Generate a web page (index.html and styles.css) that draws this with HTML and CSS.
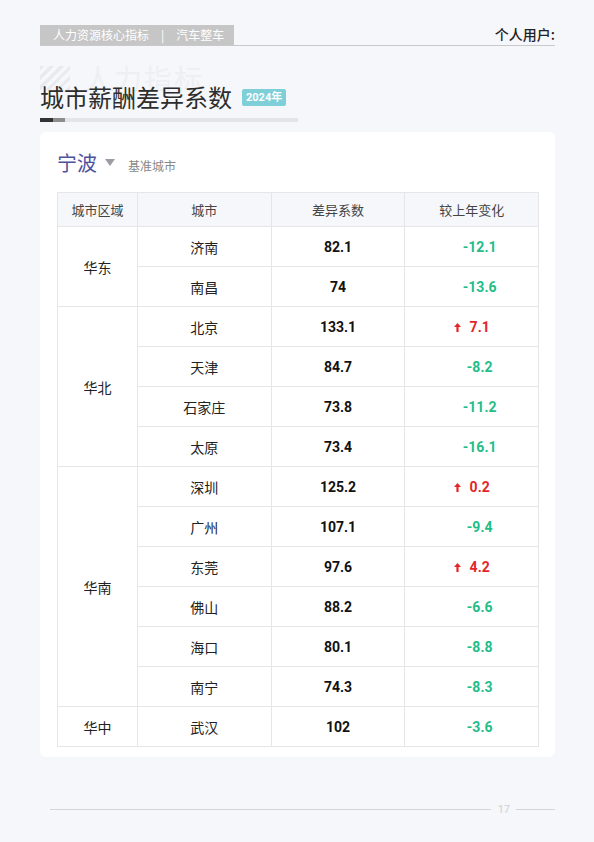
FILE: index.html
```html
<!DOCTYPE html>
<html lang="zh">

<head>
    <meta charset="UTF-8">
    <meta name="viewport" content="width=device-width, initial-scale=1.0">
    <title>城市薪酬差异系数</title>
    <link rel="stylesheet" href="styles.css">
</head>

<body>
    <header class="topbar">
        <div class="crumb">人力资源核心指标<span class="sep">|</span>汽车整车</div>
        <div class="user">个人用户:</div>
    </header>

    <div class="title-block">
        <div class="watermark"><span class="stripes"></span>人力指标</div>
        <h1>城市薪酬差异系数 <span class="badge">2024年</span></h1>
        <div class="underbar"><span class="dark"></span><span class="mid"></span></div>
    </div>

    <div class="card">
        <div class="city-pick">
            <span class="city">宁波</span>
            <span class="caret"></span>
            <span class="hint">基准城市</span>
        </div>
        <table class="data">
            <thead>
                <tr>
                    <th class="col-region">城市区域</th>
                    <th>城市</th>
                    <th>差异系数</th>
                    <th>较上年变化</th>
                </tr>
            </thead>
            <tbody>
                <tr>
                    <td rowspan="2">华东</td>
                    <td>济南</td>
                    <td class="num">82.1</td>
                    <td class="chg down"><span class="arrow"></span>-12.1</td>
                </tr>
                <tr>
                    <td>南昌</td>
                    <td class="num">74</td>
                    <td class="chg down"><span class="arrow"></span>-13.6</td>
                </tr>
                <tr>
                    <td rowspan="4">华北</td>
                    <td>北京</td>
                    <td class="num">133.1</td>
                    <td class="chg up"><span class="arrow"><svg width="7" height="9" viewBox="0 0 7 9"><path d="M3.5 0 L7 4 H4.6 V9 H2.4 V4 H0 Z" fill="currentColor"/></svg></span>7.1</td>
                </tr>
                <tr>
                    <td>天津</td>
                    <td class="num">84.7</td>
                    <td class="chg down"><span class="arrow"></span>-8.2</td>
                </tr>
                <tr>
                    <td>石家庄</td>
                    <td class="num">73.8</td>
                    <td class="chg down"><span class="arrow"></span>-11.2</td>
                </tr>
                <tr>
                    <td>太原</td>
                    <td class="num">73.4</td>
                    <td class="chg down"><span class="arrow"></span>-16.1</td>
                </tr>
                <tr>
                    <td rowspan="6">华南</td>
                    <td>深圳</td>
                    <td class="num">125.2</td>
                    <td class="chg up"><span class="arrow"><svg width="7" height="9" viewBox="0 0 7 9"><path d="M3.5 0 L7 4 H4.6 V9 H2.4 V4 H0 Z" fill="currentColor"/></svg></span>0.2</td>
                </tr>
                <tr>
                    <td>广州</td>
                    <td class="num">107.1</td>
                    <td class="chg down"><span class="arrow"></span>-9.4</td>
                </tr>
                <tr>
                    <td>东莞</td>
                    <td class="num">97.6</td>
                    <td class="chg up"><span class="arrow"><svg width="7" height="9" viewBox="0 0 7 9"><path d="M3.5 0 L7 4 H4.6 V9 H2.4 V4 H0 Z" fill="currentColor"/></svg></span>4.2</td>
                </tr>
                <tr>
                    <td>佛山</td>
                    <td class="num">88.2</td>
                    <td class="chg down"><span class="arrow"></span>-6.6</td>
                </tr>
                <tr>
                    <td>海口</td>
                    <td class="num">80.1</td>
                    <td class="chg down"><span class="arrow"></span>-8.8</td>
                </tr>
                <tr>
                    <td>南宁</td>
                    <td class="num">74.3</td>
                    <td class="chg down"><span class="arrow"></span>-8.3</td>
                </tr>
                <tr>
                    <td>华中</td>
                    <td>武汉</td>
                    <td class="num">102</td>
                    <td class="chg down"><span class="arrow"></span>-3.6</td>
                </tr>
            </tbody>
        </table>
    </div>

    <footer class="pager">
        <span class="line"></span>
        <span class="page">17</span>
        <span class="line short"></span>
    </footer>
</body>

</html>
```

FILE: styles.css
```css
:root {
    --CjkFont: "Noto Sans CJK SC", "Microsoft YaHei", sans-serif;
    --NumFont: Roboto, "Noto Sans CJK SC", sans-serif;
    --Border: #e6e6e8;
    --Green: #1fbd87;
    --Red: #e3262c;
}

body {
    font-family: var(--CjkFont);
    margin: 0;
    padding: 0 39px 0 40px;
    background-color: #f6f7fa;
    color: #333;
}

.topbar {
    display: flex;
    justify-content: space-between;
    align-items: flex-end;
    padding-top: 24px;
    border-bottom: 1px solid #c9c9cc;
}

.crumb {
    background-color: #c6c6c6;
    color: #fff;
    font-size: 12px;
    line-height: 20px;
    height: 20px;
    padding: 0 13px;
    width: 194px;
    box-sizing: border-box;
    white-space: nowrap;
}

.crumb .sep {
    margin: 0 12px;
}

.user {
    font-size: 14px;
    font-weight: 500;
    color: #222;
    line-height: 20px;
    padding-bottom: 1px;
}

.title-block {
    position: relative;
    width: 258px;
    padding-top: 35px;
}

.watermark {
    position: absolute;
    top: 16px;
    left: 0;
    font-size: 28px;
    line-height: 32px;
    color: #eeeff2;
    display: flex;
    align-items: center;
    gap: 14px;
    letter-spacing: 2px;
}

.watermark .stripes {
    width: 30px;
    height: 24px;
    background: repeating-linear-gradient(135deg, #e9eaee 0 3px, transparent 3px 7px);
}

h1 {
    position: relative;
    margin: 0;
    font-size: 24px;
    font-weight: 400;
    line-height: 32px;
    color: #2d2d2d;
    display: flex;
    align-items: center;
}

.badge {
    margin-left: 10px;
    background-color: #7fcfd9;
    color: #fff;
    font-family: var(--NumFont);
    font-size: 11px;
    font-weight: 700;
    line-height: 17px;
    padding: 0 4px;
    border-radius: 2px;
}

.underbar {
    margin-top: 5px;
    height: 4px;
    background-color: #e3e4e9;
    display: flex;
}

.underbar .dark {
    width: 13px;
    background-color: #333;
}

.underbar .mid {
    width: 12px;
    background-color: #8d8d8f;
}

.card {
    margin-top: 10px;
    background-color: #fff;
    border-radius: 6px;
    padding: 15px 16px 10px 17px;
}

.city-pick {
    display: flex;
    align-items: flex-end;
    height: 30px;
    margin-bottom: 15px;
}

.city {
    font-size: 20px;
    line-height: 28px;
    color: #4d519b;
}

.caret {
    width: 0;
    height: 0;
    border-left: 5px solid transparent;
    border-right: 5px solid transparent;
    border-top: 7px solid #9c9ca2;
    margin: 0 13px 11px 8px;
}

.hint {
    font-size: 12px;
    color: #888;
    line-height: 20px;
    margin-bottom: 1px;
}

.data {
    width: 100%;
    border-collapse: collapse;
    table-layout: fixed;
    text-align: center;
}

.data th,
.data td {
    border: 1.5px solid var(--Border);
    padding: 0;
}

.data th {
    background-color: #f6f7fa;
    font-weight: 400;
    font-size: 13px;
    color: #444;
    height: 33px;
}

.data th.col-region {
    width: 79px;
}

.data td {
    font-size: 14px;
    height: 39px;
    color: #222;
}

.data td.num {
    font-family: var(--NumFont);
    font-weight: 700;
    color: #111;
}

.data td.chg {
    font-family: var(--NumFont);
    font-weight: 700;
}

.chg .arrow {
    display: inline-block;
    width: 16px;
    height: 9px;
    text-align: left;
}

.chg .arrow svg {
    display: block;
}

.chg.down {
    color: var(--Green);
}

.chg.up {
    color: var(--Red);
}

.pager {
    display: flex;
    align-items: center;
    margin: 46px 0 0 10px;
}

.pager .line {
    flex: 1;
    height: 1px;
    background-color: #d5d6da;
}

.pager .line.short {
    flex: 0 0 39px;
}

.pager .page {
    font-family: var(--NumFont);
    font-size: 11px;
    color: #d0d0d4;
    padding: 0 6px 0 7px;
}
```
